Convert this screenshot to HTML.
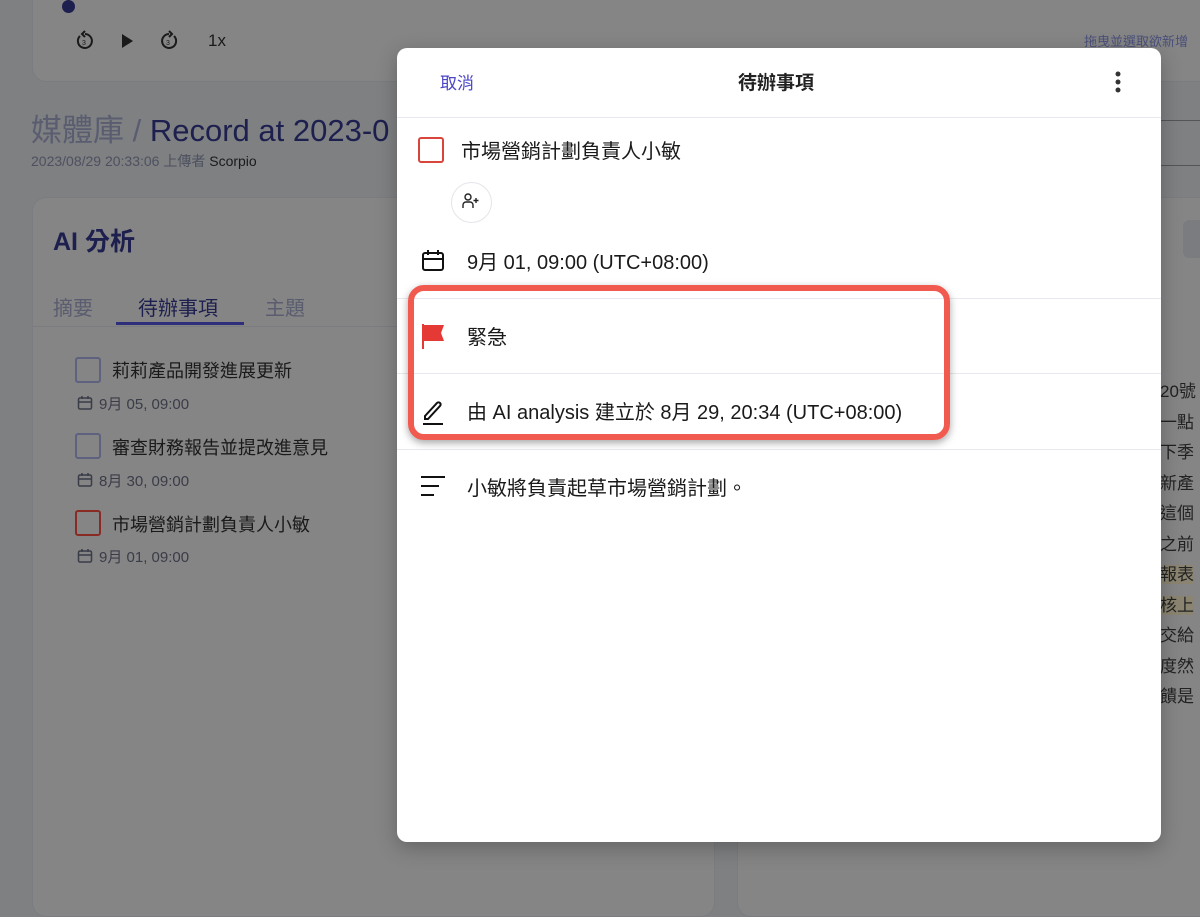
<!DOCTYPE html>
<html><head><meta charset="utf-8"><style>
*{box-sizing:border-box;margin:0;padding:0}
body{width:1200px;height:881px;overflow:hidden;background:#7e8082;font-family:"Liberation Sans","Noto Sans CJK TC",sans-serif;position:relative}
.card{position:absolute;background:#858585;border:1px solid #7a7c80;border-radius:14px}
.abs{position:absolute;white-space:nowrap}
.modal{position:absolute;left:397px;top:48px;width:764px;height:794px;background:#fff;border-radius:10px;box-shadow:0 6px 20px rgba(0,0,0,.25)}
.hr{position:absolute;left:0;right:0;height:1px;background:#e8e9ee}
.cal{display:inline-block;vertical-align:-2px;margin-right:6px}
</style></head><body>
<div class="card" style="left:32px;top:-20px;width:1200px;height:102px"></div>
<div class="abs" style="left:62px;top:0;width:13px;height:13px;border-radius:50%;background:#1d1f4e"></div>
<svg class="abs" style="left:74px;top:30px" width="22" height="22" viewBox="0 0 22 22" fill="none" stroke="#1a1a1a" stroke-width="2"><path d="M6 6 A7 7 0 1 0 11 4"/><path d="M11 1 L8 4 L11 7"/><text x="8" y="15" font-size="7" fill="#1a1a1a" stroke="none">3</text></svg>
<svg class="abs" style="left:118px;top:32px" width="18" height="18"><path d="M4 2 L15 9 L4 16Z" fill="#1a1a1a"/></svg>
<svg class="abs" style="left:158px;top:30px" width="22" height="22" viewBox="0 0 22 22" fill="none" stroke="#1a1a1a" stroke-width="2"><path d="M16 6 A7 7 0 1 1 11 4"/><path d="M11 1 L14 4 L11 7"/><text x="8" y="15" font-size="7" fill="#1a1a1a" stroke="none">3</text></svg>
<div class="abs" style="left:208px;top:31px;font-size:17px;color:#1a1a1a">1x</div>
<div class="abs" style="left:1084px;top:31px;font-size:13px;color:#4a4f7a">拖曳並選取欲新增</div>
<div class="abs" style="left:31px;top:105px;font-size:31px;color:#1d1f4e"><span style="color:#5a5c70">媒體庫 / </span>Record at 2023-0</div>
<div class="abs" style="left:31px;top:151px;font-size:14px;color:#4e5060">2023/08/29 20:33:06 上傳者 <span style="color:#1a1a1a">Scorpio</span></div>
<div class="card" style="left:32px;top:197px;width:683px;height:720px"></div>
<div class="card" style="left:737px;top:197px;width:500px;height:720px"></div>
<div class="abs" style="left:1150px;top:120px;width:60px;height:46px;border:1px solid #555;border-radius:6px"></div>
<div class="abs" style="left:1183px;top:220px;width:30px;height:38px;background:#7a7c80;border-radius:6px"></div>
<div class="abs" style="left:1160px;top:377px;font-size:17px;line-height:30.5px;color:#222;white-space:normal;width:60px">20號<br>一點<br>下季<br>新產<br>這個<br>之前<br><span style="background:#8a8470">報表</span><br><span style="background:#8a8470">核上</span><br>交給<br>度然<br>饋是</div>
<div class="abs" style="left:53px;top:222px;font-size:25px;font-weight:bold;color:#1d1f4e">AI 分析</div>
<div class="abs" style="left:53px;top:292px;font-size:20px;color:#5a5c70">摘要</div>
<div class="abs" style="left:138px;top:292px;font-size:20px;color:#1d1f4e">待辦事項</div>
<div class="abs" style="left:265px;top:292px;font-size:20px;color:#5a5c70">主題</div>
<div class="abs" style="left:116px;top:322px;width:128px;height:3px;background:#2e2f7a"></div>
<div class="abs" style="left:33px;top:326px;width:680px;height:1px;background:#7a7c80"></div>
<div class="abs" style="left:75px;top:357px;width:26px;height:26px;border:2px solid #5f6180;border-radius:3px"></div>
<div class="abs" style="left:112px;top:357px;font-size:18px;color:#1a1a1a">莉莉產品開發進展更新</div>
<div class="abs" style="left:77px;top:393px;font-size:15px;color:#3a3c48"><svg class="cal" width="16" height="16" fill="none" stroke="#3a3c48" stroke-width="1.5"><rect x="1.5" y="3" width="13" height="11" rx="1.5"/><path d="M1.5 7h13M5 1v3M11 1v3"/></svg>9月 05, 09:00</div>
<div class="abs" style="left:75px;top:433px;width:26px;height:26px;border:2px solid #5f6180;border-radius:3px"></div>
<div class="abs" style="left:112px;top:434px;font-size:18px;color:#1a1a1a">審查財務報告並提改進意見</div>
<div class="abs" style="left:77px;top:470px;font-size:15px;color:#3a3c48"><svg class="cal" width="16" height="16" fill="none" stroke="#3a3c48" stroke-width="1.5"><rect x="1.5" y="3" width="13" height="11" rx="1.5"/><path d="M1.5 7h13M5 1v3M11 1v3"/></svg>8月 30, 09:00</div>
<div class="abs" style="left:75px;top:510px;width:26px;height:26px;border:2px solid #8a2a24;border-radius:3px"></div>
<div class="abs" style="left:112px;top:511px;font-size:18px;color:#1a1a1a">市場營銷計劃負責人小敏</div>
<div class="abs" style="left:77px;top:546px;font-size:15px;color:#3a3c48"><svg class="cal" width="16" height="16" fill="none" stroke="#3a3c48" stroke-width="1.5"><rect x="1.5" y="3" width="13" height="11" rx="1.5"/><path d="M1.5 7h13M5 1v3M11 1v3"/></svg>9月 01, 09:00</div>

<div class="modal">
 <div class="abs" style="left:43px;top:21px;font-size:17px;color:#4b46c8">取消</div>
 <div class="abs" style="left:341px;top:20px;font-size:19px;font-weight:bold;color:#222">待辦事項</div>
 <svg class="abs" style="left:716px;top:22px" width="10" height="26"><circle cx="5" cy="4" r="2.5" fill="#333"/><circle cx="5" cy="12" r="2.5" fill="#333"/><circle cx="5" cy="20" r="2.5" fill="#333"/></svg>
 <div class="hr" style="top:69px"></div>
 <div class="abs" style="left:21px;top:89px;width:26px;height:26px;border:2px solid #d9453b;border-radius:3px"></div>
 <div class="abs" style="left:64px;top:87px;font-size:20px;color:#1a1a1a">市場營銷計劃負責人小敏</div>
 <div class="abs" style="left:54px;top:134px;width:41px;height:41px;border:1.5px solid #e4e5ea;border-radius:50%"></div>
 <svg class="abs" style="left:63px;top:143px" width="22" height="22" fill="none" stroke="#222" stroke-width="1.4"><circle cx="8" cy="6" r="3"/><path d="M3 17v-3a3 3 0 0 1 3-3h4a3 3 0 0 1 3 3v3"/><path d="M16 7v5M13.5 9.5h5"/></svg>
 <svg class="abs" style="left:23px;top:200px" width="26" height="26" fill="none" stroke="#111" stroke-width="2"><rect x="3" y="5" width="20" height="17" rx="2"/><path d="M3 11h20M8 2v5M18 2v5"/></svg>
 <div class="abs" style="left:70px;top:198px;font-size:20px;color:#1a1a1a">9月 01, 09:00 (UTC+08:00)</div>
 <div class="hr" style="top:250px"></div>
 <div class="hr" style="top:325px"></div>
 <div class="hr" style="top:401px"></div>
 <svg class="abs" style="left:22px;top:274px" width="28" height="28"><path d="M3 2h2v25h-2z M5 3h20l-3 8 3 8H5z" fill="#e53935"/></svg>
 <div class="abs" style="left:70px;top:273px;font-size:20px;color:#1a1a1a">緊急</div>
 <svg class="abs" style="left:24px;top:350px" width="26" height="28" fill="none" stroke="#111" stroke-width="2"><path d="M4 18 L16 5 a2 2 0 0 1 3 3 L7 21 H4z"/><path d="M2 26h20"/></svg>
 <div class="abs" style="left:70px;top:348px;font-size:20px;color:#1a1a1a">由 AI analysis 建立於 8月 29, 20:34 (UTC+08:00)</div>
 <svg class="abs" style="left:23px;top:426px" width="26" height="24" stroke="#111" stroke-width="2"><path d="M1 3h24M1 12h18M1 21h13"/></svg>
 <div class="abs" style="left:70px;top:424px;font-size:20px;color:#1a1a1a">小敏將負責起草市場營銷計劃。</div>
</div>
<div class="abs" style="left:408px;top:285px;width:542px;height:155px;border:6px solid #f05a4f;border-radius:16px;box-shadow:0 3px 8px rgba(0,0,0,.35)"></div>
</body></html>
